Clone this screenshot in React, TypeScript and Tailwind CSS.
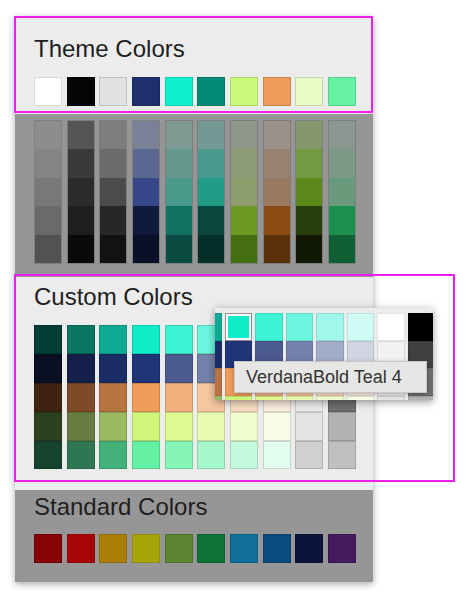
const theme = ["#ffffff", "#050505", "#e2e2e2", "#1e2f70", "#10f0cc", "#058a75", "#ccf97a", "#ef9c5c", "#e6fbc5", "#66f2a4"];

// dimmed tints/shades under theme colors (column by column, top to bottom)
const shades = [
  ["#8d8d8d", "#848484", "#787878", "#6a6a6a", "#525252"],
  ["#555555", "#3a3a3a", "#2b2b2b", "#1e1e1e", "#0a0a0a"],
  ["#7d7d7d", "#6b6b6b", "#4b4b4b", "#272727", "#121212"],
  ["#7b8196", "#5b6891", "#36488a", "#101a3d", "#0a1028"],
  ["#7f9993", "#67988d", "#4a9a8c", "#107262", "#0a4b41"],
  ["#749994", "#4b9a8e", "#219c87", "#09463d", "#05302a"],
  ["#929889", "#8d9a76", "#8d9d6c", "#6b9a22", "#446f10"],
  ["#9c928a", "#9a8270", "#9a7b62", "#8a4a12", "#5a300a"],
  ["#84986b", "#729a42", "#5b8a1a", "#283f0b", "#101804"],
  ["#8a9790", "#7c9987", "#6a9a7c", "#1c9050", "#0f6034"],
];

const custom = [
  ["#013d35", "#0b0f22", "#3e2410", "#2c3f1e", "#16432e"],
  ["#0b7564", "#14204a", "#7f4a28", "#667c40", "#2f7652"],
  ["#0eaa94", "#1b2d66", "#b87443", "#9cba62", "#45b17a"],
  ["#10ebc8", "#1f3578", "#f09c5a", "#d0f57b", "#66f0a4"],
  ["#3ef2d4", "#4b5a8f", "#f2b07f", "#dff88f", "#86f5b8"],
  ["#6ef5df", "#7481aa", "#f5c8a0", "#e8fbb0", "#a6f7cb"],
  ["#9ff8e9", "#a3acc8", "#f8dcc0", "#f1fccc", "#c5fadc"],
  ["#cffcf4", "#d1d5e3", "#fbeee0", "#f7fde6", "#e3fdee"],
  ["#ffffff", "#f2f2f2", "#ececec", "#e3e3e3", "#d0d0d0"],
  ["#000000", "#404040", "#6e6e6e", "#b2b2b2", "#c0c0c0"],
];

const standard = ["#870303", "#a80606", "#ab7f05", "#a8a50b", "#5c8634", "#0f7237", "#0f6e9a", "#0b4a7d", "#0b153a", "#451b5e"];

function Title({ children }: { children: string }) {
  return <h2 className="h-[24px] text-[24px] leading-[24px] font-normal text-[#1e1e1e]">{children}</h2>;
}

function SwatchRow({ colors }: { colors: string[] }) {
  return (
    <div className="grid grid-cols-10 gap-[4.5px] w-[322px]">
      {colors.map((c, i) => (
        <div key={i} className="h-[28.5px] border border-black/15" style={{ backgroundColor: c }} />
      ))}
    </div>
  );
}

function Zoomed() {
  // magnified strip of custom columns 3..10 shown while hovering
  const cols = custom.slice(2);
  return (
    <div className="absolute left-[200px] top-[292px] w-[218px] h-[92px] overflow-hidden bg-[#ebebeb] shadow-[0_2px_8px_rgba(0,0,0,0.4)]">
      <div className="flex gap-[3px] ml-[-21px] pt-[5px]">
        {cols.map((col, ci) => (
          <div key={ci} className="flex flex-col w-[27.5px] shrink-0">
            {col.slice(0, 4).map((c, ri) =>
              ci === 1 && ri === 0 ? (
                <div key={ri} className="h-[27.5px] border border-[#8f8f8f] bg-white p-[2px]">
                  <div className="w-full h-full" style={{ backgroundColor: c }} />
                </div>
              ) : (
                <div key={ri} className="h-[27.5px] border border-black/10" style={{ backgroundColor: c }} />
              )
            )}
          </div>
        ))}
      </div>
    </div>
  );
}

export default function App() {
  return (
    <div className="relative w-[474px] h-[602px] bg-white overflow-hidden" style={{ fontFamily: '"Liberation Sans", Arial, sans-serif' }}>
      <div className="relative ml-[15px] mt-[16px] w-[358px] shadow-[0_2px_7px_rgba(0,0,0,0.35)]">
        {/* Theme colors */}
        <div className="bg-[#ececec] pl-[19px] pt-[21px] pb-[8px]">
          <Title>Theme Colors</Title>
          <div className="mt-[16px]">
            <SwatchRow colors={theme} />
          </div>
        </div>

        {/* Shades (dimmed) */}
        <div className="bg-[#959595] pl-[19px] pt-[6px] pb-[13px]">
          <div className="grid grid-cols-10 gap-[4.5px] w-[322px]">
            {shades.map((col, i) => (
              <div key={i} className="flex flex-col border border-black/15">
                {col.map((c, j) => (
                  <div key={j} className="h-[28.6px]" style={{ backgroundColor: c }} />
                ))}
              </div>
            ))}
          </div>
        </div>

        {/* Custom colors */}
        <div className="bg-[#ececec] pl-[19px] pt-[8px] pb-[21px]">
          <Title>Custom Colors</Title>
          <div className="mt-[16px] grid grid-cols-10 gap-[4.5px] w-[322px]">
            {custom.map((col, i) => (
              <div key={i} className="flex flex-col">
                {col.map((c, j) => (
                  <div key={j} className="h-[28.8px] border border-black/15" style={{ backgroundColor: c }} />
                ))}
              </div>
            ))}
          </div>
        </div>

        {/* Standard colors (dimmed) */}
        <div className="bg-[#969696] pl-[19px] pt-[5px] pb-[19px]">
          <Title>Standard Colors</Title>
          <div className="mt-[15px]">
            <SwatchRow colors={standard} />
          </div>
        </div>

        <Zoomed />

        {/* tooltip */}
        <div className="absolute left-[219px] top-[345px] w-[193px] h-[32px] flex items-center pl-[11px] bg-[#e6e6e4] border border-[#c9c9c9] shadow-[0_1px_4px_rgba(0,0,0,0.3)] text-[18px] text-[#333333]">
          VerdanaBold Teal 4
        </div>
      </div>

      {/* annotation boxes */}
      <div className="absolute left-[14px] top-[16px] w-[359px] h-[97px] border-[2.5px] border-[#f01cf0]" />
      <div className="absolute left-[14px] top-[274px] w-[441px] h-[208px] border-[2.5px] border-[#f01cf0]" />
    </div>
  );
}
